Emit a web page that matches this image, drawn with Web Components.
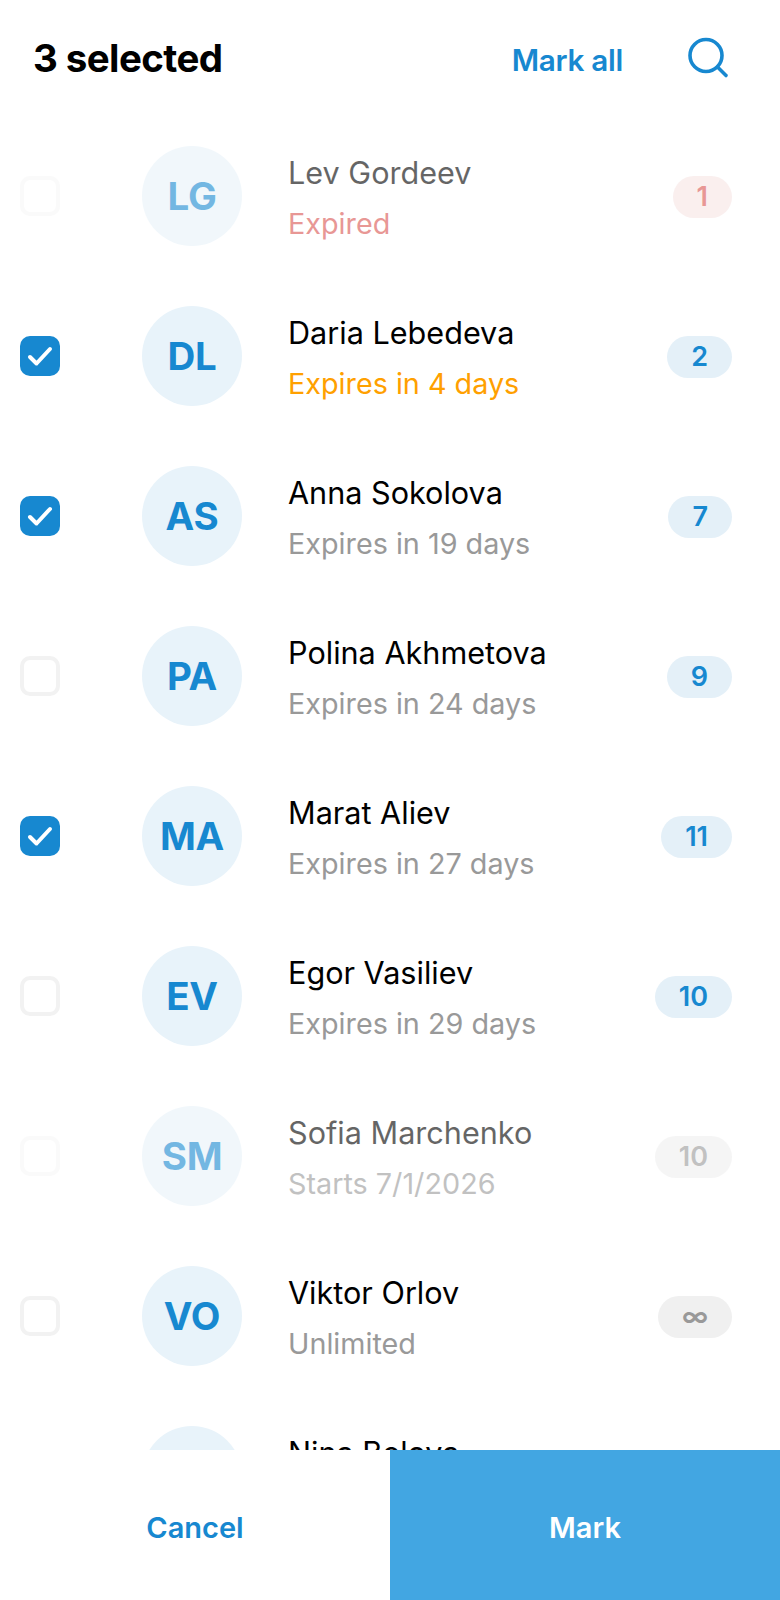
<!DOCTYPE html>
<html lang="en">
<head>
<meta charset="utf-8">
<title>Mark members</title>
<style>
    html, body { margin: 0; height: 100%; background: #fff; }
    body { font-family: Inter, "Liberation Sans", sans-serif; }
</style>
</head>
<body>
<mark-screen>
    <mark-header slot="header" count="3"></mark-header>
    <member-row initials="LG" name="Lev Gordeev" status="Expired" tone="expired" badge="1" faded></member-row>
    <member-row initials="DL" name="Daria Lebedeva" status="Expires in 4 days" tone="soon" badge="2" checked></member-row>
    <member-row initials="AS" name="Anna Sokolova" status="Expires in 19 days" badge="7" checked></member-row>
    <member-row initials="PA" name="Polina Akhmetova" status="Expires in 24 days" badge="9"></member-row>
    <member-row initials="MA" name="Marat Aliev" status="Expires in 27 days" badge="11" checked></member-row>
    <member-row initials="EV" name="Egor Vasiliev" status="Expires in 29 days" badge="10"></member-row>
    <member-row initials="SM" name="Sofia Marchenko" status="Starts 7/1/2026" tone="muted" badge="10" faded></member-row>
    <member-row initials="VO" name="Viktor Orlov" status="Unlimited" tone="muted" badge="∞"></member-row>
    <member-row initials="NB" name="Nina Belova" status="Unlimited" tone="muted" badge="∞"></member-row>
    <mark-footer slot="footer"></mark-footer>
</mark-screen>

<script>
class MarkScreen extends HTMLElement {
    constructor() {
        super();
        this.attachShadow({ mode: "open" });
        this.shadowRoot.innerHTML = `
            <style>
                :host {
                    display: flex;
                    flex-direction: column;
                    height: 1600px;
                    overflow: hidden;
                    background: #fff;
                }
                #list {
                    flex: 1;
                    min-height: 0;
                    overflow: hidden;
                }
            </style>
            <slot name="header"></slot>
            <div id="list"><slot></slot></div>
            <slot name="footer"></slot>
        `;
    }
}

class MarkHeader extends HTMLElement {
    constructor() {
        super();
        this.attachShadow({ mode: "open" });
        this.shadowRoot.innerHTML = `
            <style>
                :host {
                    display: flex;
                    align-items: center;
                    height: 116px;
                    padding: 0 48px 0 33px;
                    box-sizing: border-box;
                }
                h1 {
                    flex: 1;
                    margin: 0;
                    font-size: 38.5px;
                    font-weight: 700;
                    letter-spacing: -0.6px;
                    color: #000;
                }
                span {
                    font-size: 29.7px;
                    font-weight: 600;
                    letter-spacing: -0.3px;
                    color: #1788d0;
                    margin: 3px 61px 0 0;
                }
                svg {
                    display: block;
                    width: 48px;
                    height: 48px;
                }
            </style>
            <h1></h1>
            <span>Mark all</span>
            <svg viewBox="0 0 48 48" fill="none" stroke="#1788d0" stroke-width="3.6" stroke-linecap="round">
                <circle cx="22" cy="21.5" r="16"/>
                <path d="M33.5 33l8.5 8.5"/>
            </svg>
        `;
        this.shadowRoot.querySelector("h1").textContent = this.getAttribute("count") + " selected";
    }
}

class MemberRow extends HTMLElement {
    constructor() {
        super();
        this.attachShadow({ mode: "open" });
        this.shadowRoot.innerHTML = `
            <style>
                :host {
                    display: flex;
                    align-items: center;
                    height: 160px;
                    padding: 0 48px 0 20px;
                    box-sizing: border-box;
                }
                :host([faded]) { opacity: 0.6; }
                #box {
                    flex: none;
                    width: 40px;
                    height: 40px;
                    box-sizing: border-box;
                    border: 4px solid #f2f2f2;
                    border-radius: 10px;
                }
                :host([faded]) #box { opacity: 0.6; }
                :host([checked]) #box {
                    background: #1788d0;
                    border: 0;
                }
                #box svg { display: none; width: 40px; height: 40px; }
                :host([checked]) #box svg { display: block; }
                #avatar {
                    flex: none;
                    display: flex;
                    align-items: center;
                    justify-content: center;
                    width: 100px;
                    height: 100px;
                    margin: 0 46px 0 82px;
                    border-radius: 50%;
                    background: #e8f3fa;
                    color: #1788d0;
                    font-size: 38.5px;
                    font-weight: 700;
                    letter-spacing: -0.3px;
                }
                #text { flex: 1; min-width: 0; padding-top: 4px; }
                #name {
                    font-size: 30.6px;
                    line-height: 36px;
                    color: #000;
                }
                #status {
                    margin-top: 15px;
                    font-size: 28.75px;
                    line-height: 36px;
                    color: #999;
                }
                :host([tone="expired"]) #status { color: #d9534f; }
                :host([tone="soon"]) #status { color: #ffa000; }
                #badge {
                    flex: none;
                    height: 42px;
                    line-height: 42px;
                    margin-top: 2px;
                    padding: 0 24px;
                    border-radius: 21px;
                    background: #e4f0f8;
                    color: #1788d0;
                    font-size: 27px;
                    font-weight: 600;
                }
                :host([tone="expired"]) #badge { background: #f7e5e4; color: #d9534f; }
                :host([tone="muted"]) #badge { background: #f0f0f0; color: #999; }
            </style>
            <div id="box">
                <svg viewBox="0 0 40 40" fill="none" stroke="#fff" stroke-width="4" stroke-linecap="round" stroke-linejoin="round">
                    <path d="M10 21l6.5 6.5L30 13"/>
                </svg>
            </div>
            <div id="avatar"></div>
            <div id="text">
                <div id="name"></div>
                <div id="status"></div>
            </div>
            <div id="badge"></div>
        `;
        const root = this.shadowRoot;
        root.querySelector("#avatar").textContent = this.getAttribute("initials");
        root.querySelector("#name").textContent = this.getAttribute("name");
        root.querySelector("#status").textContent = this.getAttribute("status");
        root.querySelector("#badge").textContent = this.getAttribute("badge");
    }
}

class MarkFooter extends HTMLElement {
    constructor() {
        super();
        this.attachShadow({ mode: "open" });
        this.shadowRoot.innerHTML = `
            <style>
                :host {
                    display: grid;
                    grid-template-columns: 1fr 1fr;
                    height: 150px;
                    background: #fff;
                }
                div {
                    display: flex;
                    align-items: center;
                    justify-content: center;
                    padding-top: 5px;
                    font-size: 29px;
                    font-weight: 600;
                    color: #1788d0;
                }
                #mark { background: #42a6e2; color: #fff; }
            </style>
            <div>Cancel</div>
            <div id="mark">Mark</div>
        `;
    }
}

customElements.define("mark-screen", MarkScreen);
customElements.define("mark-header", MarkHeader);
customElements.define("member-row", MemberRow);
customElements.define("mark-footer", MarkFooter);
</script>
</body>
</html>
